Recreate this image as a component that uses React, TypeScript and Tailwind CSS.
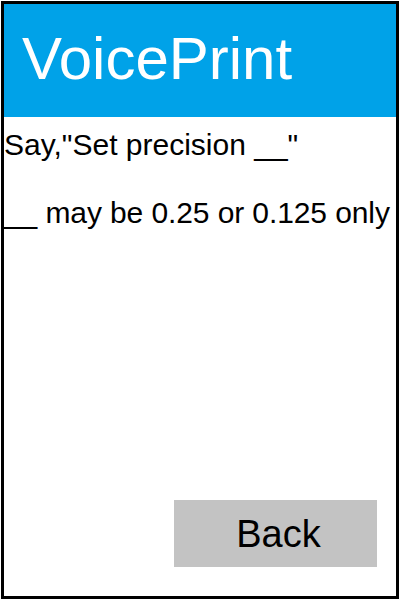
export default function App() {
  return (
    <div className="w-[400px] h-[600px] bg-white p-px font-['Liberation_Sans',Arial,sans-serif]">
      <div className="flex h-full w-full flex-col border-[3px] border-black">
        <header className="h-[113px] bg-[#00a2e8] pl-[18px] pt-[25px]">
          <h1 className="text-[60px] leading-[60px] text-white">VoicePrint</h1>
        </header>

        <div className="mt-[13px] flex flex-col gap-[38px] text-[30px] leading-[30px] text-black">
          <p>Say,"Set precision __"</p>
          <p className="tracking-[-0.1px]">__ may be 0.25 or 0.125 only</p>
        </div>

        <div className="mt-auto mb-[29px] mr-[19px] flex justify-end">
          <button className="flex h-[67px] w-[203px] items-center justify-center bg-[#c3c3c3] pl-[6px] text-[38px] leading-[38px] text-black">
            Back
          </button>
        </div>
      </div>
    </div>
  );
}
